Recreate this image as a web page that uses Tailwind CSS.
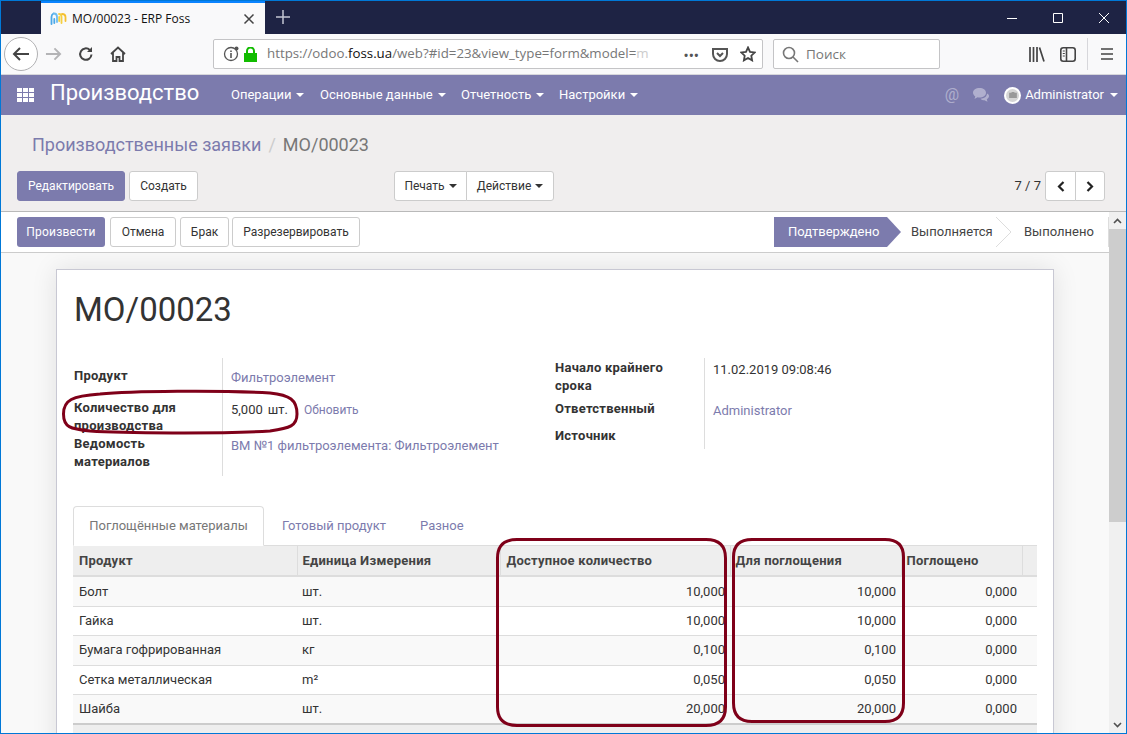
<!DOCTYPE html>
<html lang="ru">
<head>
    <meta charset="UTF-8">
    <title>MO/00023 - ERP Foss</title>
    <script src="https://cdn.jsdelivr.net/npm/@tailwindcss/browser@4"></script>
</head>
<body class="bg-white">
<div class="relative w-[1127px] h-[734px] overflow-hidden font-['Roboto',sans-serif] text-[13px] text-[#333]">
    <div class="w-full h-full border border-[#0078d7] flex flex-col">

        <!-- Browser tabs -->
        <div class="h-[33px] shrink-0 bg-[#1e2344] flex items-stretch">
            <div class="ml-[40px] w-[224px] bg-[#f9f9fa] border-t-2 border-[#0a84ff] flex items-center pl-[9px] pr-[10px] font-['Open_Sans',sans-serif] text-[12px] text-[#111]">
                <svg class="w-[17px] h-[16px] mr-[5px]" viewBox="0 0 17 16" fill="none" stroke-width="1.800" stroke-linecap="round">
                    <path d="M1.500 13V6q0-2.500 2-3.500" stroke="#4aa8e8"/>
                    <path d="M4 2.500Q7 2.500 7 6v5" stroke="#6cbcf0"/>
                    <path d="M4.300 8v4" stroke="#4aa8e8"/>
                    <path d="M9 3q2.500 0 2.500 3v6" stroke="#f5d040"/>
                    <path d="M9.200 6v4" stroke="#f5d040"/>
                    <path d="M12 3q3.500 0 3.500 3v4" stroke="#f5c030"/>
                </svg>
                <span>MO/00023 - ERP Foss</span>
                <svg class="ml-auto w-[12px] h-[12px]" viewBox="0 0 12 12" stroke="#444" stroke-width="1.500"><path d="M1.500 1.500l9 9M10.500 1.500l-9 9"/></svg>
            </div>
            <svg class="ml-[11px] mt-[9px] w-[14px] h-[14px]" viewBox="0 0 14 14" stroke="#c4c6d2" stroke-width="1.500"><path d="M7 0v14M0 7h14"/></svg>
            <div class="ml-auto flex items-center pr-[17px] gap-[36px]">
                <svg class="w-[10px] h-[10px]" viewBox="0 0 10 10" stroke="#fff"><path d="M0 5.500h10"/></svg>
                <svg class="w-[10px] h-[10px]" viewBox="0 0 10 10" stroke="#fff" fill="none"><path d="M.5.500h9v9h-9z"/></svg>
                <svg class="w-[10px] h-[10px]" viewBox="0 0 10 10" stroke="#fff"><path d="M0 0l10 10M10 0L0 10"/></svg>
            </div>
        </div>

        <!-- Browser toolbar -->
        <div class="h-[41px] shrink-0 bg-[#f9f9fa] border-b border-[#d7d7db] flex items-center relative">
            <div class="ml-[3px] w-[34px] h-[34px] rounded-full border border-[#b1b1b3] bg-white flex items-center justify-center">
                <svg class="w-[18px] h-[16px]" viewBox="0 0 18 16" fill="none" stroke="#444" stroke-width="2"><path d="M17 8H2M8 2L2 8l6 6"/></svg>
            </div>
            <svg class="ml-[7px] w-[17px] h-[16px]" viewBox="0 0 18 16" fill="none" stroke="#b4b4b6" stroke-width="2"><path d="M1 8h15M10 2l6 6-6 6"/></svg>
            <svg class="ml-[16px] w-[16px] h-[16px]" viewBox="0 0 16 16" fill="none" stroke="#444" stroke-width="2"><path d="M13.500 8.500A5.700 5.700 0 1 1 11.800 4"/><path d="M14 1v5H9" fill="#444" stroke="none"/></svg>
            <svg class="ml-[16px] w-[16px] h-[16px]" viewBox="0 0 16 16" fill="none" stroke="#444" stroke-width="1.800"><path d="M1 8l7-6.500L15 8M3 6.500V15h3.500v-4h3v4H13V6.500"/></svg>
            <div class="ml-[87px] w-[550px] h-[30px] bg-white border border-[#c4c4c6] rounded-[2px] flex items-center pl-[9px] font-['Open_Sans',sans-serif] text-[13.300px] text-[#777]">
                <svg class="w-[16px] h-[16px] shrink-0" viewBox="0 0 16 16" fill="none" stroke="#555" stroke-width="1.300"><circle cx="8" cy="8" r="6.500"/><path d="M8 7v5M8 4.500v1.500" stroke-width="1.600"/><circle cx="13.500" cy="2.500" r="2" fill="#555" stroke="none"/></svg>
                <svg class="ml-[5px] w-[13px] h-[15px] shrink-0" viewBox="0 0 13 15"><path d="M0 6h13v9H0z" fill="#12bc00"/><path d="M3 6V4a3.500 3.500 0 0 1 7 0v2" fill="none" stroke="#12bc00" stroke-width="2"/></svg>
                <div class="ml-[10px] w-[381px] whitespace-nowrap">https://odoo.<span class="text-[#111]">foss.ua</span>/web?#id=23&amp;view_type=form&amp;model=<span class="text-[#ccc]">m</span></div>
                <span class="ml-[36px] w-[16px] text-[#555] text-[11px] font-bold tracking-[1px] leading-none">•••</span>
                <svg class="ml-[12px] w-[16px] h-[15px] shrink-0" viewBox="0 0 16 15" fill="none" stroke="#555" stroke-width="2"><path d="M1 2h14v5a7 7 0 0 1-14 0z"/><path d="M5 6l3 3 3-3"/></svg>
                <svg class="ml-[12px] w-[16px] h-[16px] shrink-0" viewBox="0 0 16 16" fill="none" stroke="#444" stroke-width="1.800"><path d="M8 1.500l2 4.300 4.700.6-3.400 3.300.8 4.700L8 12l-4.100 2.400.8-4.700L1.300 6.400 6 5.800z"/></svg>
            </div>
            <div class="ml-[10px] w-[167px] h-[30px] bg-white border border-[#c4c4c6] rounded-[2px] flex items-center pl-[8px] font-['Open_Sans',sans-serif] text-[13.500px] text-[#777]">
                <svg class="w-[17px] h-[17px]" viewBox="0 0 17 17" fill="none" stroke="#777" stroke-width="1.600"><circle cx="7" cy="7" r="5.500"/><path d="M11 11l5 5"/></svg>
                <span class="ml-[7px]">Поиск</span>
            </div>
            <svg class="ml-[89px] w-[16px] h-[15px]" viewBox="0 0 16 15" stroke="#444" stroke-width="1.700" fill="none"><path d="M1 0v15M4.500 0v15M8 0v15M10.500.500l4.500 14"/></svg>
            <svg class="ml-[15px] w-[16px] h-[15px]" viewBox="0 0 16 15" fill="none" stroke="#444" stroke-width="1.600"><rect x=".8" y=".8" width="14.400" height="13.400" rx="2.500"/><path d="M6.500 1v13"/><path d="M2.800 4h2M2.800 6.500h2M2.800 9h2" stroke-width="1"/></svg>
            <div class="ml-[11px] w-px h-[32px] bg-[#d7d7db]"></div>
            <svg class="ml-[13px] w-[12px] h-[12px]" viewBox="0 0 12 12" stroke="#444" stroke-width="1.600"><path d="M0 1h12M0 6h12M0 11h12"/></svg>
        </div>

        <!-- Odoo menu -->
        <nav class="h-[40px] shrink-0 bg-[#7c7bad] flex items-center text-white">
            <div class="ml-[16px] w-[17px] h-[14px] grid grid-cols-3 gap-[1.500px]">
                <i class="bg-white"></i><i class="bg-white"></i><i class="bg-white"></i>
                <i class="bg-white"></i><i class="bg-white"></i><i class="bg-white"></i>
                <i class="bg-white"></i><i class="bg-white"></i><i class="bg-white"></i>
            </div>
            <span class="ml-[16px] text-[22px] w-[181px] -mt-[6px]">Производство</span>
            <a class="flex items-center w-[89px]">Операции<i class="ml-[5px] border-x-4 border-t-4 border-x-transparent border-t-white"></i></a>
            <a class="flex items-center w-[141px]">Основные данные<i class="ml-[5px] border-x-4 border-t-4 border-x-transparent border-t-white"></i></a>
            <a class="flex items-center w-[98px]">Отчетность<i class="ml-[5px] border-x-4 border-t-4 border-x-transparent border-t-white"></i></a>
            <a class="flex items-center">Настройки<i class="ml-[5px] border-x-4 border-t-4 border-x-transparent border-t-white"></i></a>
            <span class="ml-auto text-[16px] text-white/40">@</span>
            <svg class="ml-[14px] w-[17px] h-[14px]" viewBox="0 0 17 14" fill="#fff" fill-opacity=".4"><path d="M6.500 0C2.900 0 0 2 0 4.700c0 1.500 1 2.900 2.300 3.700L1.500 11l3-1.700c.7.100 1.300.2 2 .2 3.600 0 6.500-2.100 6.500-4.800S10.100 0 6.500 0z"/><path d="M14 5.500c0 3-3 5-6.500 5.200 1 1 2.400 1.500 4 1.500l3 1.500-.7-2.500c1.300-.7 2.200-1.900 2.200-3.200 0-1-.8-2-2-2.500z"/></svg>
            <div class="ml-[14px] w-[17px] h-[17px] rounded-full bg-white flex items-center justify-center">
                <div class="w-[13px] h-[13px] rounded-full bg-[#d5d5d5] flex items-center justify-center">
                    <svg class="w-[8px] h-[6px]" viewBox="0 0 9 7" fill="#999"><path d="M0 1h2.500l.7-1h2.600l.7 1H9v6H0z"/></svg>
                </div>
            </div>
            <span class="ml-[4px]">Administrator</span>
            <i class="ml-[6px] mr-[8px] border-x-4 border-t-4 border-x-transparent border-t-white"></i>
        </nav>

        <!-- Control panel -->
        <div class="h-[97px] shrink-0 bg-[#f0eeee] border-b border-[#b9b9b9] pl-[16px] pr-[21px]">
            <div class="h-[24px] mt-[17px] ml-[15px] flex items-center text-[18px] text-[#777]">
                <span class="text-[#7c7bad]">Производственные заявки</span>
                <span class="mx-[7px] text-[#ccc]">/</span>
                <span>MO/00023</span>
            </div>
            <div class="mt-[15px] flex items-center text-[12px]">
                <div class="flex gap-[4px] w-[377px]">
                    <button class="h-[30px] w-[108px] bg-[#7c7bad] text-white rounded-[3px] border border-[#7c7bad]">Редактировать</button>
                    <button class="h-[30px] w-[69px] bg-white rounded-[3px] border border-[#ccc]">Создать</button>
                </div>
                <div class="flex">
                    <button class="h-[30px] w-[73px] bg-white rounded-l-[3px] border border-[#ccc] flex items-center justify-center">Печать<i class="ml-[4px] border-x-4 border-t-4 border-x-transparent border-t-[#333]"></i></button>
                    <button class="h-[30px] w-[88px] -ml-px bg-white rounded-r-[3px] border border-[#ccc] flex items-center justify-center">Действие<i class="ml-[4px] border-x-4 border-t-4 border-x-transparent border-t-[#333]"></i></button>
                </div>
                <span class="ml-auto mr-[4px] text-[13px]">7 / 7</span>
                <div class="flex">
                    <button class="h-[30px] w-[31px] bg-white rounded-l-[3px] border border-[#ccc] flex items-center justify-center">
                        <svg class="w-[8px] h-[11px]" viewBox="0 0 8 11" fill="none" stroke="#222" stroke-width="2.200"><path d="M6.500 1L2 5.500 6.500 10"/></svg>
                    </button>
                    <button class="h-[30px] w-[30px] -ml-px bg-white rounded-r-[3px] border border-[#ccc] flex items-center justify-center">
                        <svg class="w-[8px] h-[11px]" viewBox="0 0 8 11" fill="none" stroke="#222" stroke-width="2.200"><path d="M1.500 1L6 5.500 1.500 10"/></svg>
                    </button>
                </div>
            </div>
        </div>

        <div class="flex-1 min-h-0 flex">
            <div class="w-[1108px] flex flex-col">
                <!-- Status bar -->
                <div class="h-[41px] shrink-0 bg-white border-b border-[#ccc] pl-[16px] flex items-center text-[12px]">
                    <div class="flex gap-[4px]">
                        <button class="h-[30px] w-[88px] bg-[#7c7bad] text-white rounded-[3px] tracking-[0.2px]">Произвести</button>
                        <button class="h-[30px] w-[66px] mr-[-1px] ml-[1px] bg-white rounded-[3px] border border-[#ccc]">Отмена</button>
                        <button class="h-[30px] w-[49px] bg-white rounded-[3px] border border-[#ccc] ml-[1px]">Брак</button>
                        <button class="h-[30px] w-[128px] bg-white rounded-[3px] border border-[#ccc] -ml-[1px]">Разрезервировать</button>
                    </div>
                    <div class="ml-auto flex items-center h-[30px]">
                        <div class="w-[127px] h-[30px] bg-[#7c7bad] text-white pl-[14px] flex items-center [clip-path:polygon(0_0,113px_0,127px_50%,113px_100%,0_100%)] text-[13px]">Подтверждено</div>
                        <span class="ml-[10px] w-[84px] text-[13px] text-[#444]">Выполняется</span>
                        <svg class="w-[18px] h-[30px]" viewBox="0 0 18 30" fill="none" stroke="#ddd"><path d="M1 0l15 15L1 30"/></svg>
                        <span class="ml-[11px] text-[13px] text-[#444] w-[84px]">Выполнено</span>
                        <div class="w-px h-[30px] bg-[#ddd]"></div>
                    </div>
                </div>

                <!-- Sheet -->
                <div class="flex-1 min-h-0 bg-[#f9f9f9] overflow-hidden pl-[55px] pt-[16px]">
                    <div class="w-[998px] bg-white border border-[#c8c8d3] shadow-[0_0_24px_rgba(0,0,0,0.1)] pl-[16px] pr-[16px] pb-[40px]">
                        <h1 class="mt-[20px] text-[33px] leading-[40px] text-[#333] ml-[1px]">MO/00023</h1>

                        <div class="mt-[28px] flex items-start">
                            <div class="w-[481px] grid grid-cols-[148px_1fr] ml-[1px] leading-[18px]">
                                <div class="h-[40px] pt-[9px] font-bold tracking-[0.25px]">Продукт</div>
                                <div class="border-l border-[#ddd] pl-[8px] pt-[11px] text-[#7c7bad]">Фильтроэлемент</div>
                                <div class="h-[36px] pt-[1px] font-bold tracking-[0.25px]">Количество для<br>производства</div>
                                <div class="border-l border-[#ddd] pl-[8px] pt-[3px] flex items-start">5,000<span class="ml-[5px]">шт.</span><span class="ml-[16px] text-[12px] text-[#7c7bad]">Обновить</span></div>
                                <div class="h-[42px] pt-[1px] font-bold tracking-[0.25px]">Ведомость<br>материалов</div>
                                <div class="border-l border-[#ddd] pl-[8px] pt-[3px] text-[#7c7bad]">BM №1 фильтроэлемента: Фильтроэлемент</div>
                            </div>
                            <div class="w-[430px] grid grid-cols-[149px_1fr] content-start leading-[18px]">
                                <div class="h-[41px] pt-[1px] font-bold tracking-[0.25px]">Начало крайнего<br>срока</div>
                                <div class="border-l border-[#ddd] pl-[8px] pt-[3px]">11.02.2019 09:08:46</div>
                                <div class="h-[27px] pt-[1px] font-bold tracking-[0.25px]">Ответственный</div>
                                <div class="border-l border-[#ddd] pl-[8px] pt-[3px] text-[#7c7bad]">Administrator</div>
                                <div class="h-[23px] pt-[1px] font-bold tracking-[0.25px]">Источник</div>
                                <div class="border-l border-[#ddd]"></div>
                            </div>
                        </div>

                        <!-- Tabs -->
                        <div class="mt-[30px] flex h-[40px] border-b border-[#ddd] text-[13px]">
                            <div class="w-[191px] h-[40px] bg-white border border-b-white border-[#ddd] rounded-t-[4px] flex items-center justify-center text-[#777]">Поглощённые материалы</div>
                            <div class="ml-[18px] flex items-center text-[#7c7bad]">Готовый продукт</div>
                            <div class="ml-[34px] flex items-center text-[#7c7bad]">Разное</div>
                        </div>

                        <table class="w-[964px] table-fixed border-collapse">
                            <colgroup>
                                <col class="w-[224px]"><col class="w-[203px]"><col class="w-[230px]"><col class="w-[171px]"><col class="w-[121px]"><col class="w-[15px]">
                            </colgroup>
                            <thead>
                                <tr class="h-[30px] bg-[#eee] border-b-2 border-[#ddd] text-left font-bold text-[#444] tracking-[0.25px]">
                                    <th class="pl-[6px] border-r border-[#ddd]">Продукт</th>
                                    <th class="pl-[5px] border-r border-[#ddd]">Единица Измерения</th>
                                    <th class="pl-[6px] border-r border-[#ddd]">Доступное количество</th>
                                    <th class="pl-[5px] border-r border-[#ddd]">Для поглощения</th>
                                    <th class="pl-[5px] border-r border-[#ddd]">Поглощено</th>
                                    <th></th>
                                </tr>
                            </thead>
                            <tbody>
                                <tr class="h-[30px] bg-[#f9f9f9] border-b border-[#ddd]"><td class="pl-[6px]">Болт</td><td class="pl-[5px]">шт.</td><td class="pr-[5px] text-right">10,000</td><td class="pr-[5px] text-right">10,000</td><td class="pr-[5px] text-right">0,000</td><td></td></tr>
                                <tr class="h-[29px] bg-white border-b border-[#ddd]"><td class="pl-[6px]">Гайка</td><td class="pl-[5px]">шт.</td><td class="pr-[5px] text-right">10,000</td><td class="pr-[5px] text-right">10,000</td><td class="pr-[5px] text-right">0,000</td><td></td></tr>
                                <tr class="h-[30px] bg-[#f9f9f9] border-b border-[#ddd]"><td class="pl-[6px]">Бумага гофрированная</td><td class="pl-[5px]">кг</td><td class="pr-[5px] text-right">0,100</td><td class="pr-[5px] text-right">0,100</td><td class="pr-[5px] text-right">0,000</td><td></td></tr>
                                <tr class="h-[29px] bg-white border-b border-[#ddd]"><td class="pl-[6px]">Сетка металлическая</td><td class="pl-[5px]">m²</td><td class="pr-[5px] text-right">0,050</td><td class="pr-[5px] text-right">0,050</td><td class="pr-[5px] text-right">0,000</td><td></td></tr>
                                <tr class="h-[30px] bg-[#f9f9f9] border-b-2 border-[#ccc]"><td class="pl-[6px]">Шайба</td><td class="pl-[5px]">шт.</td><td class="pr-[5px] text-right">20,000</td><td class="pr-[5px] text-right">20,000</td><td class="pr-[5px] text-right">0,000</td><td></td></tr>
                                <tr class="h-[30px] bg-[#eee]"><td colspan="6"></td></tr>
                            </tbody>
                        </table>
                    </div>
                </div>
            </div>

            <!-- Scrollbar -->
            <div class="w-[17px] bg-[#f0f0f0] flex flex-col">
                <div class="h-[17px] flex items-center justify-center">
                    <svg class="w-[9px] h-[6px]" viewBox="0 0 9 6" fill="none" stroke="#505050" stroke-width="1.600"><path d="M1 5l3.500-3.500L8 5"/></svg>
                </div>
                <div class="h-[293px] bg-[#cdcdcd]"></div>
                <div class="mt-auto h-[17px] flex items-center justify-center">
                    <svg class="w-[9px] h-[6px]" viewBox="0 0 9 6" fill="none" stroke="#505050" stroke-width="1.600"><path d="M1 1l3.500 3.500L8 1"/></svg>
                </div>
            </div>
        </div>
    </div>

    <!-- Hand-drawn red marks over the page -->
    <svg class="absolute left-0 top-0 pointer-events-none" width="1127" height="734" fill="none" stroke="#7f0019" stroke-width="3">
        <path d="M63.500 414C63.500 400 72 396 100 394C130 391 220 390 270 393C290 395 297 400 297 414C297 426 290 428 270 431C220 434 120 433 90 431C70 429 63.500 427 63.500 414Z"/>
        <path d="M517 539.500H706Q725.500 539.500 725.500 558V707Q725.500 725.500 706 725.500H517Q497.500 725.500 497.500 707V558Q497.500 539.500 517 539.500Z"/>
        <path d="M752 539.500H885Q903.500 539.500 903.500 557V703Q903.500 721.500 885 721.500H752Q733.500 721.500 733.500 703V557Q733.500 539.500 752 539.500Z"/>
    </svg>
</div>
</body>
</html>
